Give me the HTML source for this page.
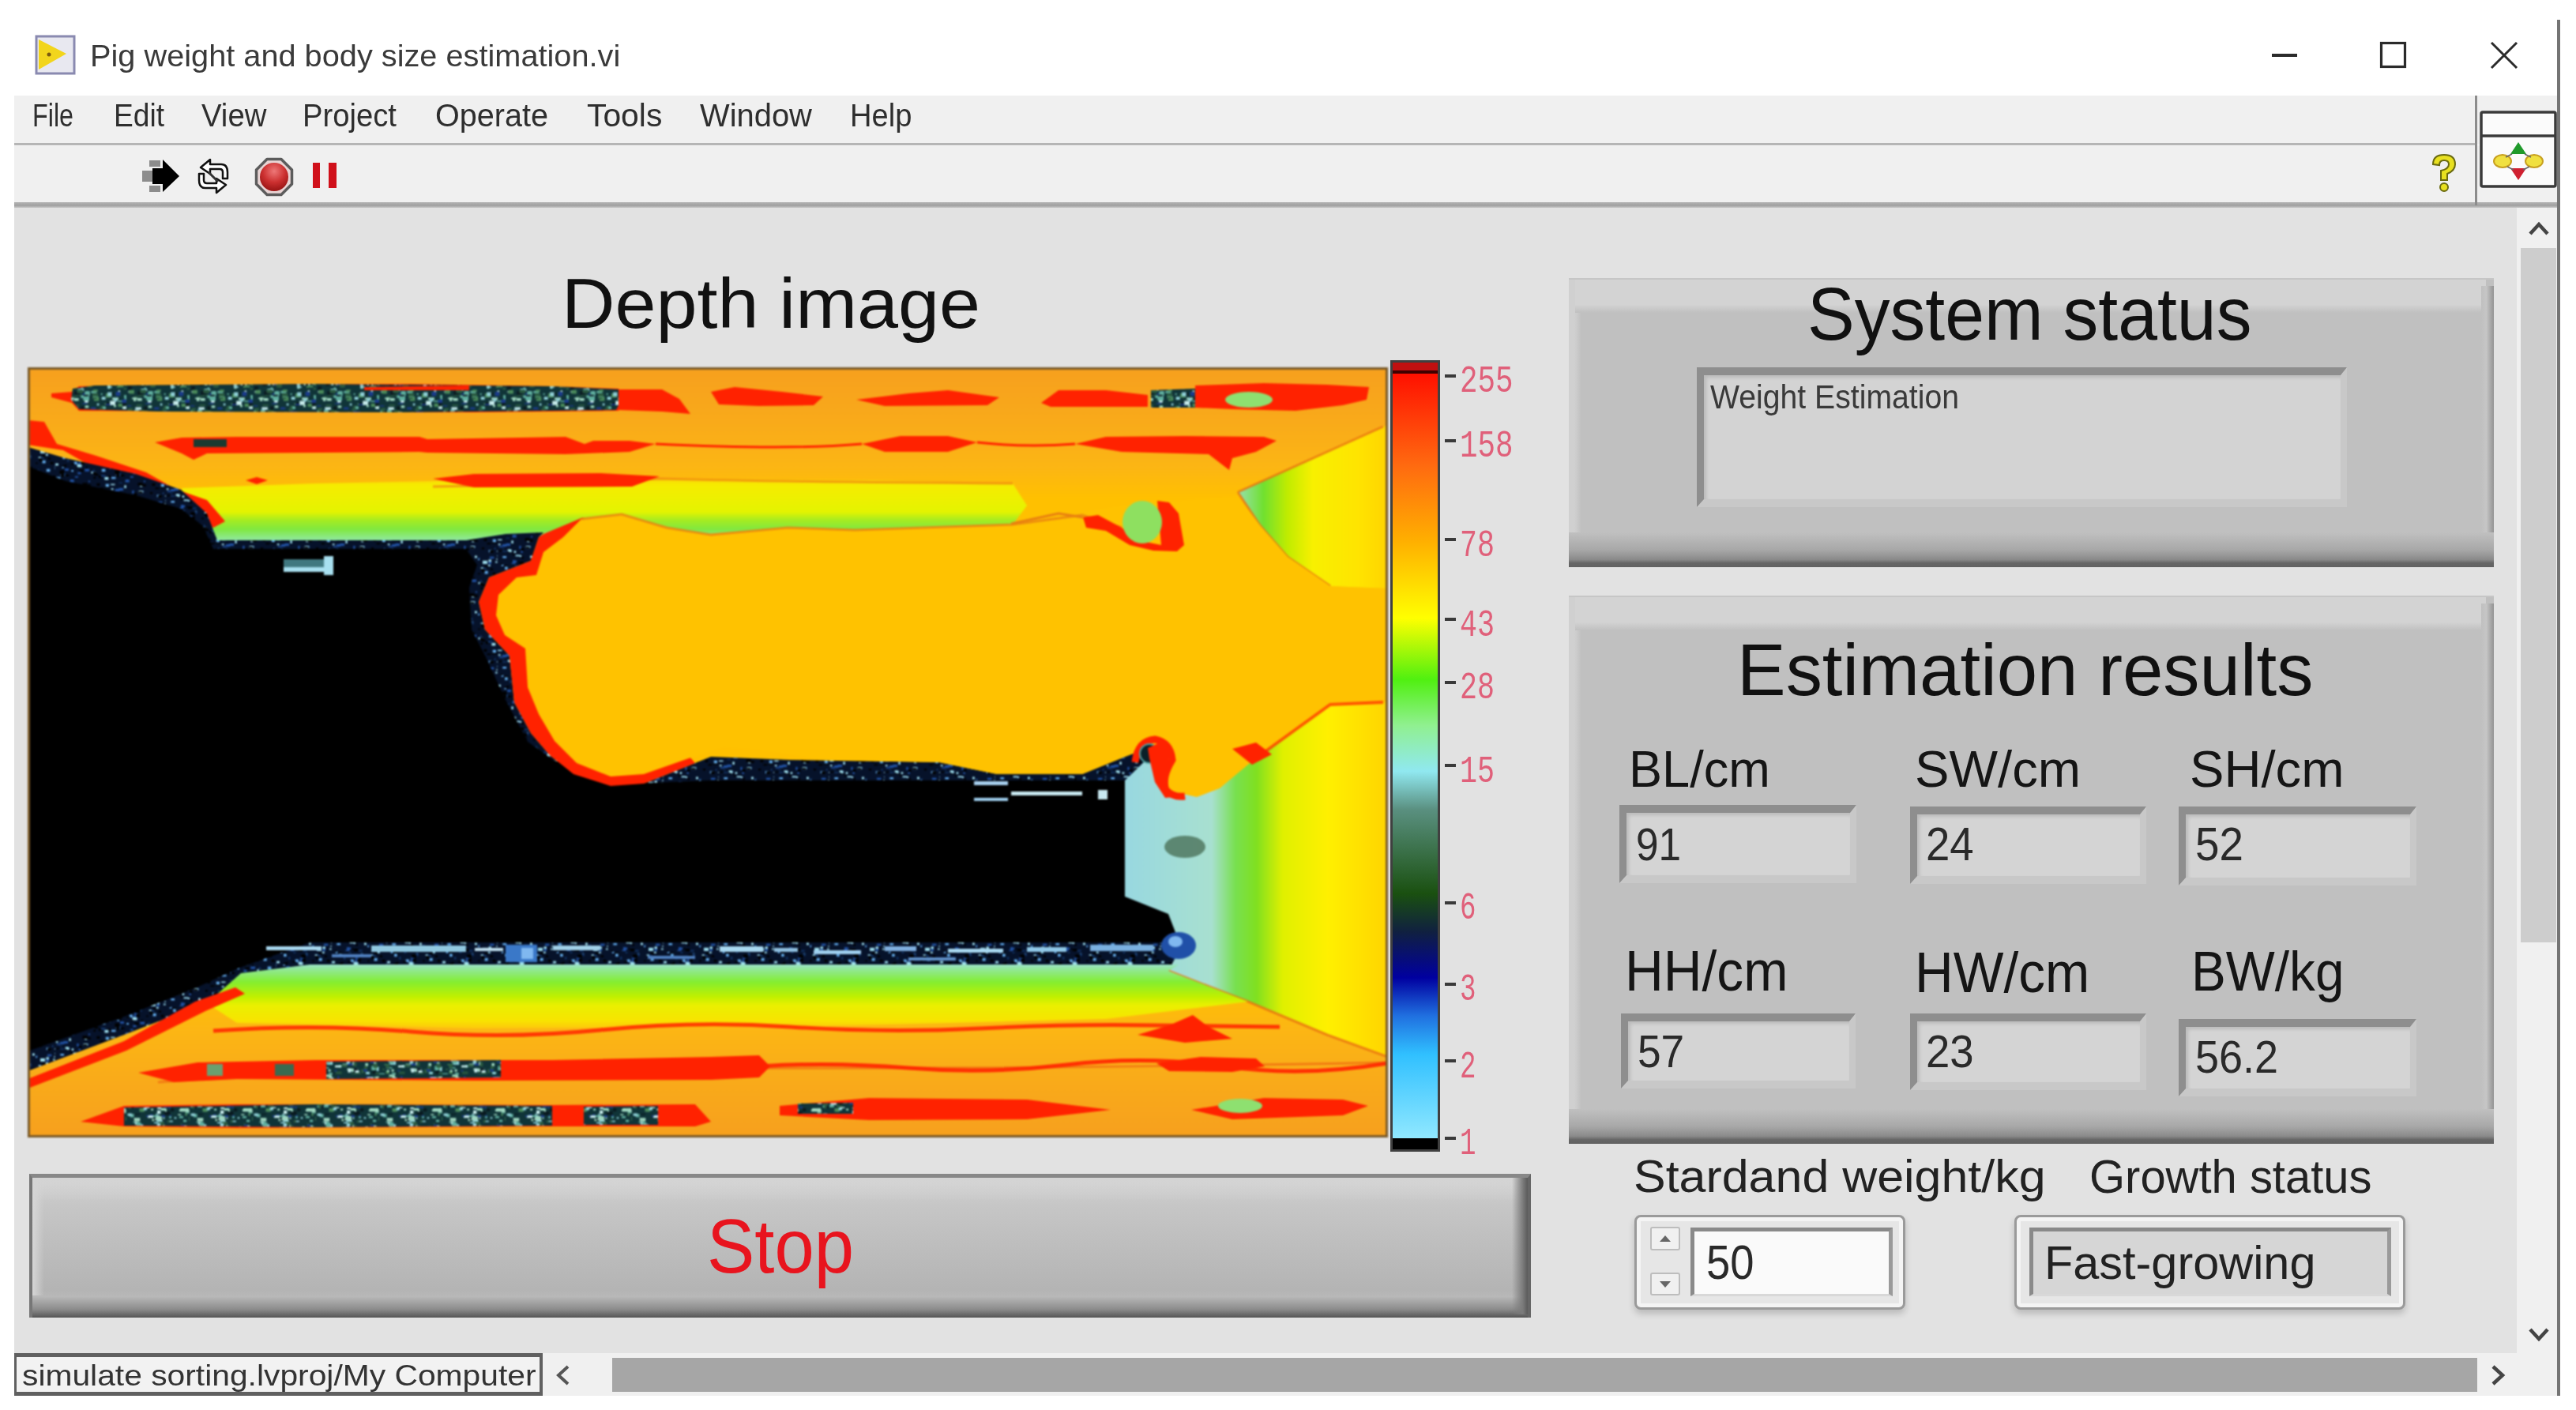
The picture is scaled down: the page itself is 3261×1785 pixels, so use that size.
<!DOCTYPE html><html><head><meta charset="utf-8"><style>
html,body{margin:0;padding:0}
body{width:3261px;height:1785px;position:relative;overflow:hidden;background:#fff;font-family:"Liberation Sans",sans-serif}
.b{position:absolute;box-sizing:border-box}
.t{position:absolute;white-space:nowrap;transform-origin:0 0}
svg{position:absolute}
</style></head><body>
<div class="b" style="left:18px;top:121px;width:3221px;height:62px;background:#f0f0f0"></div>
<div class="b" style="left:18px;top:181px;width:3116px;height:3px;background:linear-gradient(#c0c0c0,#a8a8a8 50%,#d8d8d8)"></div>
<div class="b" style="left:18px;top:184px;width:3221px;height:73px;background:#f0f0f0"></div>
<div class="b" style="left:18px;top:256px;width:3221px;height:7px;background:linear-gradient(#b4b4b4,#a0a0a0 60%,#c8c8c8)"></div>
<div class="b" style="left:3133px;top:121px;width:3px;height:139px;background:#8c8c8c"></div>
<div class="b" style="left:3237px;top:25px;width:4px;height:1742px;background:#747474"></div>
<div class="b" style="left:18px;top:263px;width:3168px;height:1450px;background:#e2e2e2"></div>
<div class="b" style="left:3186px;top:263px;width:51px;height:1450px;background:#f0f0f0"></div>
<div class="b" style="left:3191px;top:314px;width:45px;height:879px;background:#cdcdcd"></div>
<div class="b" style="left:18px;top:1713px;width:3219px;height:54px;background:#f0f0f0"></div>
<div class="b" style="left:775px;top:1719px;width:2361px;height:43px;background:#a6a6a6"></div>
<svg style="left:44px;top:44px" width="52" height="51" viewBox="0 0 52 51">
<rect x="2" y="2" width="48" height="47" fill="#e8e8f0" stroke="#8a8ab0" stroke-width="3"/>
<path d="M5 6 L40 24 L5 44 Z" fill="#f2d51c"/>
<circle cx="18" cy="25" r="2.5" fill="#7a5a10"/>
</svg>
<div class="t" style="left:113.6px;top:50.9px;font-size:39.68px;line-height:39.68px;font-family:'Liberation Sans', sans-serif;color:#3a3a3a;transform:scaleX(1.0013);">Pig weight and body size estimation.vi</div>
<div class="b" style="left:2876px;top:68px;width:32px;height:4px;background:#2b2b2b"></div>
<svg style="left:3010px;top:50px" width="40" height="40" viewBox="0 0 40 40"><rect x="4.5" y="4.5" width="30" height="30" fill="none" stroke="#2b2b2b" stroke-width="3.2"/></svg>
<svg style="left:3150px;top:50px" width="40" height="40" viewBox="0 0 40 40"><path d="M4 4 L36 36 M36 4 L4 36" stroke="#2b2b2b" stroke-width="3"/></svg>
<div class="t" style="left:41.0px;top:126.0px;font-size:40.70px;line-height:40.70px;font-family:'Liberation Sans', sans-serif;color:#2e2e2e;transform:scaleX(0.7931);">File</div>
<div class="t" style="left:144.0px;top:126.0px;font-size:40.70px;line-height:40.70px;font-family:'Liberation Sans', sans-serif;color:#2e2e2e;transform:scaleX(0.9127);">Edit</div>
<div class="t" style="left:254.5px;top:126.0px;font-size:40.70px;line-height:40.70px;font-family:'Liberation Sans', sans-serif;color:#2e2e2e;transform:scaleX(0.9420);">View</div>
<div class="t" style="left:383.0px;top:126.0px;font-size:40.70px;line-height:40.70px;font-family:'Liberation Sans', sans-serif;color:#2e2e2e;transform:scaleX(0.9396);">Project</div>
<div class="t" style="left:551.0px;top:126.0px;font-size:40.70px;line-height:40.70px;font-family:'Liberation Sans', sans-serif;color:#2e2e2e;transform:scaleX(0.9725);">Operate</div>
<div class="t" style="left:742.7px;top:126.0px;font-size:40.70px;line-height:40.70px;font-family:'Liberation Sans', sans-serif;color:#2e2e2e;transform:scaleX(1.0033);">Tools</div>
<div class="t" style="left:886.0px;top:126.0px;font-size:40.70px;line-height:40.70px;font-family:'Liberation Sans', sans-serif;color:#2e2e2e;transform:scaleX(0.9804);">Window</div>
<div class="t" style="left:1075.6px;top:126.0px;font-size:40.70px;line-height:40.70px;font-family:'Liberation Sans', sans-serif;color:#2e2e2e;transform:scaleX(0.9365);">Help</div>
<svg style="left:176px;top:198px" width="56" height="50" viewBox="0 0 56 50">
<rect x="13" y="5" width="14" height="8" fill="#8c8c8c"/><rect x="4" y="18" width="14" height="14" fill="#8c8c8c"/><rect x="13" y="37" width="14" height="8" fill="#8c8c8c"/>
<path d="M17 15 L30 15 L30 4 L51 25 L30 45 L30 35 L17 35 Z" fill="#000"/>
</svg>
<svg style="left:242px;top:198px" width="56" height="50" viewBox="0 0 56 50">
<path d="M12 14 L24 4 L24 10 L38 10 Q46 10 46 20 L46 28 L40 28 L40 20 Q40 16 36 16 L24 16 L24 22 Z" fill="#fff" stroke="#111" stroke-width="2.5" stroke-linejoin="round"/>
<path d="M44 36 L32 46 L32 40 L18 40 Q10 40 10 30 L10 22 L16 22 L16 30 Q16 34 20 34 L32 34 L32 28 Z" fill="#fff" stroke="#111" stroke-width="2.5" stroke-linejoin="round"/>
<path d="M22 20 L34 32" stroke="#333" stroke-width="3"/>
</svg>
<svg style="left:321px;top:198px" width="52" height="52" viewBox="0 0 52 52">
<defs><radialGradient id="rg" cx="50%" cy="30%" r="65%"><stop offset="0" stop-color="#ee7878"/><stop offset="0.6" stop-color="#cc3030"/><stop offset="1" stop-color="#a01818"/></radialGradient></defs>
<path d="M17 3.5 L35 3.5 L48.5 17 L48.5 35 L35 48.5 L17 48.5 L3.5 35 L3.5 17 Z" fill="#e8d4d4" stroke="#5c5c5c" stroke-width="3.5" stroke-linejoin="round"/>
<circle cx="26" cy="26" r="18" fill="url(#rg)"/>
</svg>
<div class="b" style="left:396px;top:206px;width:9px;height:32px;background:#d0101a"></div>
<div class="b" style="left:416px;top:206px;width:10px;height:32px;background:#d0101a"></div>
<svg style="left:3072px;top:192px" width="44" height="56" viewBox="0 0 44 56">
<path d="M8 16 Q8 4 22 4 Q36 4 36 16 Q36 24 26 28 L26 36 L18 36 L18 24 Q28 22 28 16 Q28 11 22 11 Q16 11 16 17 Z" fill="#e8e020" stroke="#6a6a10" stroke-width="2"/>
<circle cx="22" cy="45" r="5" fill="#e8e020" stroke="#6a6a10" stroke-width="2"/>
</svg>
<svg style="left:3138px;top:139px" width="100" height="100" viewBox="0 0 100 100">
<rect x="3" y="3" width="94" height="94" rx="2" fill="#fbfbfb" stroke="#3a3a3a" stroke-width="3.5"/>
<line x1="3" y1="33" x2="97" y2="33" stroke="#3a3a3a" stroke-width="3.5"/>
<path d="M50 41 L60 56 L40 56 Z" fill="#1f9a2a"/>
<path d="M50 89 L60 74 L40 74 Z" fill="#d02030"/>
<ellipse cx="30" cy="65" rx="11" ry="8" fill="#f0e040" stroke="#c8a020" stroke-width="2"/>
<ellipse cx="70" cy="65" rx="11" ry="8" fill="#f0e040" stroke="#c8a020" stroke-width="2"/>
<path d="M42 56 L34 60 M58 56 L66 60 M36 72 L44 76 M64 72 L56 76" stroke="#666" stroke-width="1.5"/>
</svg>
<svg style="left:3200px;top:276px" width="28" height="26" viewBox="0 0 28 26"><path d="M3 20 L14 8 L25 20" fill="none" stroke="#444" stroke-width="4.5"/></svg>
<svg style="left:3200px;top:1677px" width="28" height="26" viewBox="0 0 28 26"><path d="M3 6 L14 18 L25 6" fill="none" stroke="#444" stroke-width="4.5"/></svg>
<svg style="left:3150px;top:1727px" width="26" height="28" viewBox="0 0 26 28"><path d="M6 3 L18 14 L6 25" fill="none" stroke="#444" stroke-width="4.5"/></svg>
<svg style="left:699px;top:1727px" width="26" height="28" viewBox="0 0 26 28"><path d="M20 3 L8 14 L20 25" fill="none" stroke="#555" stroke-width="4"/></svg>
<div class="b" style="left:18px;top:1713px;width:669px;height:54px;background:#f2f2f2;border:5px solid #606060;border-left-width:3px;border-right-width:4px"></div>
<div class="t" style="left:27.5px;top:1722.8px;font-size:37.50px;line-height:37.50px;font-family:'Liberation Sans', sans-serif;color:#333;transform:scaleX(1.0876);">simulate sorting.lvproj/My Computer</div>
<svg style="left:35px;top:465px;filter:blur(0.9px)" width="1722" height="975" viewBox="35 465 1722 975"><defs><pattern id="nz" width="80" height="80" patternUnits="userSpaceOnUse"><rect width="80" height="80" fill="#103438"/><rect x="19.0" y="43.5" width="4.2" height="3.9" fill="#4a8a5a"/><rect x="48.4" y="72.7" width="4.8" height="3.6" fill="#c8ecec"/><rect x="79.7" y="37.6" width="7.0" height="3.3" fill="#1a3a8a"/><rect x="18.6" y="12.1" width="7.6" height="2.9" fill="#8fd0d8"/><rect x="53.7" y="5.1" width="6.5" height="3.8" fill="#0a1a20"/><rect x="62.4" y="65.9" width="3.6" height="3.8" fill="#a0d8c0"/><rect x="57.1" y="73.7" width="4.4" height="4.7" fill="#2a5a40"/><rect x="77.1" y="10.7" width="4.2" height="1.4" fill="#2a5a40"/><rect x="17.4" y="77.2" width="4.6" height="4.0" fill="#0a1a20"/><rect x="33.7" y="66.7" width="5.4" height="3.6" fill="#a0d8c0"/><rect x="46.7" y="72.3" width="6.1" height="5.3" fill="#0a1a20"/><rect x="79.3" y="53.7" width="3.0" height="5.0" fill="#4a8a5a"/><rect x="57.1" y="16.9" width="7.0" height="3.7" fill="#0a1a20"/><rect x="10.0" y="38.6" width="5.8" height="3.3" fill="#60b0a0"/><rect x="64.0" y="32.8" width="2.9" height="2.5" fill="#a0d8c0"/><rect x="69.8" y="3.5" width="5.7" height="1.4" fill="#60b0a0"/><rect x="44.1" y="73.8" width="3.7" height="2.2" fill="#8fd0d8"/><rect x="24.8" y="6.2" width="5.6" height="1.3" fill="#c8ecec"/><rect x="77.7" y="23.3" width="3.6" height="4.2" fill="#60b0a0"/><rect x="25.1" y="76.7" width="7.4" height="2.9" fill="#2a5a40"/><rect x="69.6" y="30.9" width="7.2" height="4.2" fill="#4a8a5a"/><rect x="49.6" y="75.2" width="5.0" height="3.1" fill="#c8ecec"/><rect x="74.9" y="35.0" width="3.5" height="2.5" fill="#60b0a0"/><rect x="0.9" y="33.2" width="5.5" height="1.3" fill="#1a3a8a"/><rect x="4.8" y="50.2" width="4.8" height="4.2" fill="#60b0a0"/><rect x="48.7" y="22.3" width="4.9" height="3.8" fill="#8fd0d8"/><rect x="77.1" y="20.1" width="4.7" height="3.8" fill="#60b0a0"/><rect x="14.2" y="14.8" width="6.5" height="4.9" fill="#0a1a20"/><rect x="24.0" y="30.2" width="6.6" height="1.3" fill="#1a3a8a"/><rect x="24.8" y="17.8" width="6.8" height="2.3" fill="#1a3a8a"/><rect x="54.2" y="52.0" width="2.6" height="3.8" fill="#60b0a0"/><rect x="54.0" y="18.0" width="6.9" height="5.4" fill="#4a8a5a"/><rect x="26.9" y="52.0" width="7.3" height="3.2" fill="#c8ecec"/><rect x="63.0" y="2.7" width="7.7" height="2.6" fill="#1a3a8a"/><rect x="69.1" y="27.2" width="7.0" height="1.6" fill="#60b0a0"/><rect x="47.2" y="33.7" width="5.1" height="4.9" fill="#2a5a40"/><rect x="27.7" y="33.4" width="4.5" height="3.0" fill="#a0d8c0"/><rect x="12.5" y="0.4" width="7.7" height="5.1" fill="#a0d8c0"/><rect x="44.7" y="78.9" width="6.3" height="1.3" fill="#2a5a40"/><rect x="66.9" y="53.0" width="5.1" height="2.5" fill="#60b0a0"/><rect x="71.2" y="68.9" width="7.1" height="5.5" fill="#4a8a5a"/><rect x="64.8" y="3.6" width="7.4" height="4.3" fill="#c8ecec"/><rect x="71.7" y="72.0" width="5.5" height="1.3" fill="#4a8a5a"/><rect x="13.7" y="24.0" width="6.0" height="3.5" fill="#a0d8c0"/><rect x="4.3" y="73.0" width="2.7" height="1.8" fill="#2a5a40"/><rect x="64.9" y="4.9" width="3.3" height="1.7" fill="#4a8a5a"/><rect x="13.7" y="63.3" width="7.5" height="4.7" fill="#8fd0d8"/><rect x="39.0" y="45.7" width="4.4" height="4.5" fill="#c8ecec"/><rect x="21.5" y="42.2" width="4.5" height="3.3" fill="#8fd0d8"/><rect x="68.6" y="62.0" width="2.3" height="1.4" fill="#2a5a40"/><rect x="78.0" y="68.4" width="2.5" height="3.4" fill="#60b0a0"/><rect x="12.6" y="5.7" width="4.3" height="2.9" fill="#0a1a20"/><rect x="28.9" y="15.3" width="4.0" height="1.7" fill="#8fd0d8"/><rect x="57.3" y="30.4" width="2.5" height="2.0" fill="#60b0a0"/><rect x="36.9" y="52.0" width="5.2" height="4.0" fill="#8fd0d8"/><rect x="49.8" y="34.5" width="4.2" height="3.4" fill="#60b0a0"/><rect x="33.6" y="55.5" width="4.8" height="2.3" fill="#0a1a20"/><rect x="55.6" y="5.7" width="4.5" height="3.1" fill="#8fd0d8"/><rect x="74.9" y="29.9" width="7.4" height="4.7" fill="#0a1a20"/><rect x="9.7" y="55.2" width="7.6" height="4.4" fill="#a0d8c0"/><rect x="53.4" y="58.7" width="5.4" height="1.7" fill="#8fd0d8"/><rect x="37.9" y="18.9" width="4.3" height="3.5" fill="#4a8a5a"/><rect x="52.7" y="30.1" width="6.9" height="2.7" fill="#4a8a5a"/><rect x="2.0" y="9.2" width="4.9" height="4.3" fill="#0a1a20"/><rect x="46.3" y="63.9" width="2.2" height="4.6" fill="#c8ecec"/><rect x="8.5" y="59.9" width="7.6" height="1.5" fill="#60b0a0"/><rect x="69.6" y="14.4" width="2.5" height="5.6" fill="#c8ecec"/><rect x="36.3" y="56.0" width="7.7" height="2.3" fill="#a0d8c0"/><rect x="75.1" y="44.5" width="7.8" height="2.9" fill="#c8ecec"/><rect x="77.8" y="33.0" width="6.5" height="1.9" fill="#2a5a40"/><rect x="12.5" y="32.1" width="7.3" height="1.9" fill="#2a5a40"/><rect x="59.9" y="73.3" width="5.1" height="3.1" fill="#1a3a8a"/><rect x="10.9" y="60.2" width="2.9" height="3.5" fill="#c8ecec"/><rect x="68.1" y="43.0" width="6.7" height="4.2" fill="#a0d8c0"/><rect x="47.6" y="46.8" width="7.9" height="5.1" fill="#0a1a20"/><rect x="1.8" y="38.4" width="4.3" height="2.0" fill="#60b0a0"/><rect x="19.1" y="38.6" width="7.2" height="3.0" fill="#2a5a40"/><rect x="56.1" y="16.5" width="5.5" height="5.2" fill="#8fd0d8"/><rect x="38.5" y="57.7" width="7.1" height="3.0" fill="#8fd0d8"/><rect x="37.4" y="18.4" width="3.4" height="4.4" fill="#4a8a5a"/><rect x="76.7" y="68.3" width="3.5" height="2.0" fill="#0a1a20"/><rect x="11.0" y="49.8" width="6.1" height="1.4" fill="#0a1a20"/><rect x="13.6" y="3.6" width="3.1" height="1.6" fill="#4a8a5a"/><rect x="9.4" y="21.1" width="7.5" height="1.4" fill="#2a5a40"/><rect x="46.4" y="54.0" width="2.0" height="2.7" fill="#a0d8c0"/><rect x="30.4" y="6.2" width="5.9" height="4.5" fill="#2a5a40"/><rect x="31.3" y="43.5" width="2.7" height="2.4" fill="#a0d8c0"/><rect x="9.0" y="71.0" width="7.5" height="1.6" fill="#60b0a0"/><rect x="54.3" y="29.5" width="4.7" height="4.1" fill="#0a1a20"/><rect x="8.6" y="75.6" width="4.0" height="3.7" fill="#4a8a5a"/><rect x="53.4" y="40.7" width="2.4" height="2.5" fill="#1a3a8a"/><rect x="51.7" y="58.4" width="2.9" height="2.8" fill="#2a5a40"/><rect x="9.9" y="74.5" width="2.8" height="2.7" fill="#a0d8c0"/><rect x="44.4" y="51.8" width="4.7" height="2.6" fill="#1a3a8a"/><rect x="56.4" y="8.6" width="3.1" height="3.6" fill="#a0d8c0"/><rect x="28.7" y="21.3" width="4.3" height="5.0" fill="#8fd0d8"/><rect x="38.3" y="21.7" width="6.2" height="3.5" fill="#60b0a0"/><rect x="75.6" y="35.9" width="6.9" height="1.5" fill="#2a5a40"/><rect x="67.8" y="9.0" width="3.6" height="1.6" fill="#4a8a5a"/><rect x="45.1" y="72.8" width="2.7" height="4.3" fill="#a0d8c0"/><rect x="53.6" y="31.3" width="7.9" height="1.8" fill="#1a3a8a"/><rect x="68.8" y="63.9" width="5.3" height="1.9" fill="#1a3a8a"/><rect x="16.2" y="20.0" width="6.7" height="1.3" fill="#2a5a40"/><rect x="71.3" y="75.9" width="4.3" height="3.6" fill="#0a1a20"/><rect x="50.7" y="78.2" width="6.1" height="2.5" fill="#2a5a40"/><rect x="2.4" y="15.2" width="5.8" height="1.7" fill="#c8ecec"/><rect x="39.3" y="41.9" width="4.8" height="2.1" fill="#c8ecec"/><rect x="3.0" y="40.0" width="5.9" height="3.2" fill="#0a1a20"/><rect x="76.7" y="71.4" width="2.8" height="4.7" fill="#8fd0d8"/><rect x="2.0" y="49.5" width="5.0" height="3.4" fill="#8fd0d8"/><rect x="74.4" y="25.8" width="7.2" height="4.3" fill="#1a3a8a"/><rect x="6.4" y="67.1" width="6.7" height="1.3" fill="#4a8a5a"/><rect x="59.2" y="27.5" width="6.8" height="5.3" fill="#c8ecec"/><rect x="35.0" y="60.5" width="4.9" height="1.7" fill="#8fd0d8"/><rect x="32.7" y="67.6" width="6.2" height="2.9" fill="#2a5a40"/><rect x="55.9" y="43.0" width="4.5" height="4.1" fill="#0a1a20"/><rect x="1.9" y="36.6" width="6.1" height="3.1" fill="#2a5a40"/><rect x="72.0" y="57.6" width="4.2" height="2.8" fill="#60b0a0"/><rect x="47.7" y="17.9" width="2.0" height="2.1" fill="#60b0a0"/><rect x="11.5" y="36.8" width="3.2" height="2.1" fill="#1a3a8a"/><rect x="46.8" y="40.3" width="5.8" height="1.8" fill="#1a3a8a"/><rect x="35.4" y="14.8" width="7.0" height="3.0" fill="#60b0a0"/><rect x="32.6" y="56.3" width="2.3" height="3.0" fill="#a0d8c0"/><rect x="39.5" y="72.7" width="7.3" height="2.3" fill="#a0d8c0"/><rect x="38.0" y="13.2" width="5.7" height="2.7" fill="#4a8a5a"/><rect x="47.6" y="64.6" width="3.7" height="5.5" fill="#2a5a40"/><rect x="63.1" y="76.9" width="4.9" height="3.7" fill="#8fd0d8"/><rect x="65.2" y="50.3" width="4.1" height="1.6" fill="#a0d8c0"/><rect x="77.5" y="47.4" width="2.0" height="1.3" fill="#4a8a5a"/><rect x="1.5" y="40.2" width="4.9" height="2.0" fill="#60b0a0"/><rect x="16.1" y="77.9" width="4.9" height="4.7" fill="#60b0a0"/><rect x="75.2" y="2.7" width="3.8" height="3.9" fill="#a0d8c0"/><rect x="7.0" y="23.5" width="7.1" height="1.7" fill="#a0d8c0"/><rect x="43.8" y="42.9" width="6.7" height="3.0" fill="#a0d8c0"/><rect x="66.9" y="44.3" width="7.5" height="2.8" fill="#a0d8c0"/><rect x="35.1" y="35.6" width="6.2" height="2.7" fill="#1a3a8a"/><rect x="40.6" y="60.2" width="7.5" height="4.3" fill="#2a5a40"/><rect x="3.4" y="13.7" width="6.5" height="4.8" fill="#4a8a5a"/><rect x="60.7" y="54.2" width="2.6" height="2.2" fill="#8fd0d8"/><rect x="70.3" y="69.8" width="4.7" height="5.1" fill="#60b0a0"/><rect x="79.8" y="0.1" width="3.2" height="4.7" fill="#4a8a5a"/><rect x="27.1" y="24.9" width="4.7" height="4.8" fill="#c8ecec"/><rect x="19.3" y="3.9" width="2.9" height="4.0" fill="#8fd0d8"/><rect x="9.0" y="23.0" width="3.3" height="4.9" fill="#a0d8c0"/><rect x="40.4" y="72.6" width="3.9" height="5.1" fill="#c8ecec"/><rect x="37.4" y="49.8" width="2.2" height="4.7" fill="#8fd0d8"/><rect x="68.7" y="8.1" width="7.7" height="2.3" fill="#4a8a5a"/><rect x="37.2" y="17.8" width="7.0" height="3.9" fill="#2a5a40"/><rect x="60.9" y="69.7" width="4.1" height="3.9" fill="#2a5a40"/><rect x="62.2" y="23.3" width="7.7" height="3.2" fill="#a0d8c0"/><rect x="16.5" y="43.1" width="4.8" height="4.4" fill="#4a8a5a"/><rect x="27.3" y="15.4" width="6.5" height="5.3" fill="#60b0a0"/><rect x="33.8" y="51.9" width="5.6" height="2.1" fill="#60b0a0"/><rect x="67.0" y="5.0" width="3.4" height="3.1" fill="#0a1a20"/><rect x="17.4" y="13.2" width="7.6" height="4.4" fill="#2a5a40"/><rect x="74.5" y="42.9" width="4.5" height="5.4" fill="#a0d8c0"/><rect x="38.7" y="61.9" width="4.4" height="5.6" fill="#8fd0d8"/><rect x="23.4" y="74.7" width="3.1" height="1.6" fill="#1a3a8a"/><rect x="23.5" y="41.6" width="5.8" height="1.4" fill="#c8ecec"/><rect x="22.1" y="34.6" width="4.1" height="4.5" fill="#0a1a20"/><rect x="11.4" y="35.5" width="7.5" height="3.2" fill="#c8ecec"/><rect x="12.3" y="61.0" width="6.2" height="5.5" fill="#60b0a0"/><rect x="75.4" y="34.5" width="7.6" height="3.3" fill="#c8ecec"/><rect x="28.8" y="68.2" width="3.7" height="3.2" fill="#60b0a0"/><rect x="64.6" y="23.8" width="3.5" height="4.7" fill="#8fd0d8"/><rect x="1.1" y="50.3" width="2.9" height="1.3" fill="#8fd0d8"/><rect x="0.2" y="78.7" width="6.8" height="2.8" fill="#60b0a0"/><rect x="78.3" y="2.8" width="3.1" height="1.3" fill="#a0d8c0"/><rect x="72.4" y="66.8" width="5.6" height="4.8" fill="#2a5a40"/><rect x="24.9" y="19.8" width="6.8" height="3.0" fill="#0a1a20"/><rect x="27.2" y="2.3" width="2.2" height="5.6" fill="#1a3a8a"/><rect x="73.0" y="64.7" width="3.5" height="1.8" fill="#a0d8c0"/><rect x="40.7" y="66.5" width="5.3" height="2.4" fill="#1a3a8a"/><rect x="3.6" y="38.9" width="2.4" height="4.8" fill="#2a5a40"/><rect x="37.4" y="53.2" width="7.6" height="4.8" fill="#a0d8c0"/><rect x="29.7" y="50.6" width="3.8" height="1.5" fill="#1a3a8a"/><rect x="79.4" y="43.8" width="4.4" height="2.7" fill="#2a5a40"/><rect x="22.3" y="20.4" width="3.7" height="3.5" fill="#60b0a0"/><rect x="11.2" y="3.0" width="4.9" height="2.2" fill="#2a5a40"/><rect x="74.5" y="49.0" width="2.2" height="3.7" fill="#4a8a5a"/><rect x="39.0" y="22.4" width="6.3" height="5.2" fill="#4a8a5a"/><rect x="34.8" y="6.1" width="2.2" height="3.3" fill="#2a5a40"/><rect x="15.6" y="73.7" width="3.1" height="2.9" fill="#a0d8c0"/><rect x="25.3" y="21.7" width="7.7" height="5.4" fill="#60b0a0"/><rect x="48.8" y="44.4" width="2.2" height="3.0" fill="#a0d8c0"/><rect x="78.4" y="6.3" width="3.4" height="2.1" fill="#4a8a5a"/><rect x="55.9" y="9.2" width="5.8" height="1.7" fill="#8fd0d8"/><rect x="75.4" y="77.9" width="6.2" height="3.1" fill="#2a5a40"/><rect x="36.9" y="23.2" width="5.4" height="2.0" fill="#2a5a40"/><rect x="76.6" y="11.5" width="7.4" height="2.0" fill="#2a5a40"/><rect x="54.0" y="51.8" width="2.9" height="1.4" fill="#1a3a8a"/><rect x="24.9" y="51.9" width="2.8" height="1.8" fill="#1a3a8a"/><rect x="42.8" y="30.6" width="2.6" height="2.9" fill="#8fd0d8"/><rect x="22.5" y="10.5" width="2.9" height="1.8" fill="#60b0a0"/><rect x="75.0" y="48.3" width="7.6" height="1.2" fill="#60b0a0"/><rect x="79.8" y="78.4" width="3.5" height="2.8" fill="#2a5a40"/><rect x="8.3" y="67.7" width="4.8" height="4.5" fill="#2a5a40"/><rect x="45.5" y="37.1" width="5.2" height="3.1" fill="#2a5a40"/><rect x="66.6" y="16.0" width="5.6" height="5.3" fill="#1a3a8a"/><rect x="24.1" y="68.7" width="7.8" height="2.6" fill="#c8ecec"/></pattern><pattern id="nzb" width="70" height="70" patternUnits="userSpaceOnUse"><rect width="70" height="70" fill="#06122a"/><rect x="22.7" y="10.6" width="4.6" height="1.4" fill="#000"/><rect x="6.6" y="40.8" width="5.6" height="1.8" fill="#60a8e8"/><rect x="30.4" y="4.9" width="2.4" height="2.5" fill="#000"/><rect x="8.7" y="15.6" width="4.5" height="4.0" fill="#000"/><rect x="41.0" y="3.5" width="2.9" height="2.9" fill="#a0e0f0"/><rect x="20.3" y="10.1" width="2.5" height="2.1" fill="#103060"/><rect x="12.7" y="40.7" width="4.6" height="2.3" fill="#000"/><rect x="49.8" y="39.5" width="4.5" height="2.7" fill="#000"/><rect x="29.9" y="22.0" width="4.3" height="2.6" fill="#2050a0"/><rect x="17.4" y="12.6" width="5.1" height="1.4" fill="#2050a0"/><rect x="36.8" y="61.3" width="4.9" height="2.1" fill="#60a8e8"/><rect x="8.3" y="29.3" width="5.0" height="1.7" fill="#000"/><rect x="29.5" y="67.3" width="2.3" height="2.9" fill="#2050a0"/><rect x="23.8" y="24.5" width="4.0" height="3.6" fill="#60a8e8"/><rect x="58.8" y="66.1" width="3.9" height="3.2" fill="#60a8e8"/><rect x="51.2" y="21.7" width="4.3" height="3.2" fill="#000"/><rect x="19.9" y="27.0" width="4.7" height="1.3" fill="#000"/><rect x="24.9" y="42.8" width="4.0" height="1.9" fill="#2050a0"/><rect x="9.1" y="17.3" width="3.6" height="3.8" fill="#60a8e8"/><rect x="11.6" y="28.1" width="3.1" height="1.6" fill="#000"/><rect x="60.5" y="19.5" width="3.7" height="2.3" fill="#000"/><rect x="67.0" y="10.6" width="2.7" height="1.9" fill="#a0e0f0"/><rect x="0.8" y="58.2" width="2.7" height="2.0" fill="#a0e0f0"/><rect x="29.3" y="25.8" width="4.3" height="4.1" fill="#103060"/><rect x="60.1" y="66.5" width="4.6" height="3.4" fill="#000"/><rect x="63.0" y="54.6" width="5.5" height="3.6" fill="#000"/><rect x="27.9" y="27.6" width="3.9" height="2.4" fill="#a0e0f0"/><rect x="4.7" y="14.6" width="2.6" height="2.2" fill="#60a8e8"/><rect x="7.2" y="39.7" width="4.1" height="4.0" fill="#000"/><rect x="1.8" y="61.2" width="4.5" height="1.6" fill="#2050a0"/><rect x="66.9" y="42.2" width="3.9" height="1.5" fill="#000"/><rect x="69.5" y="32.6" width="3.9" height="1.5" fill="#60a8e8"/><rect x="52.5" y="51.8" width="3.9" height="3.3" fill="#000"/><rect x="1.6" y="66.6" width="4.1" height="1.6" fill="#000"/><rect x="64.0" y="53.1" width="3.2" height="3.1" fill="#60a8e8"/><rect x="48.7" y="18.3" width="3.5" height="1.7" fill="#a0e0f0"/><rect x="37.3" y="54.5" width="3.3" height="1.9" fill="#a0e0f0"/><rect x="56.4" y="57.3" width="5.0" height="1.9" fill="#000"/><rect x="34.5" y="51.2" width="6.0" height="3.6" fill="#000"/><rect x="18.1" y="48.5" width="5.8" height="2.5" fill="#103060"/><rect x="69.2" y="66.9" width="3.5" height="1.9" fill="#a0e0f0"/><rect x="32.9" y="23.6" width="3.9" height="4.2" fill="#000"/><rect x="58.8" y="33.6" width="4.6" height="3.6" fill="#60a8e8"/><rect x="58.4" y="8.4" width="3.6" height="3.3" fill="#a0e0f0"/><rect x="33.5" y="12.5" width="5.2" height="2.2" fill="#103060"/><rect x="27.7" y="28.1" width="5.8" height="3.4" fill="#a0e0f0"/><rect x="69.5" y="1.9" width="4.4" height="2.6" fill="#103060"/><rect x="10.2" y="57.9" width="5.9" height="3.2" fill="#2050a0"/><rect x="10.9" y="38.4" width="2.1" height="3.6" fill="#103060"/><rect x="45.5" y="36.9" width="5.7" height="2.5" fill="#a0e0f0"/><rect x="57.8" y="14.8" width="3.0" height="2.1" fill="#a0e0f0"/><rect x="53.5" y="22.8" width="4.2" height="3.7" fill="#60a8e8"/><rect x="63.7" y="24.8" width="3.8" height="3.0" fill="#000"/><rect x="29.4" y="64.2" width="4.0" height="2.8" fill="#000"/><rect x="35.7" y="61.1" width="5.1" height="3.0" fill="#a0e0f0"/><rect x="12.1" y="33.1" width="4.9" height="2.9" fill="#2050a0"/><rect x="47.8" y="37.2" width="3.9" height="3.5" fill="#000"/><rect x="4.0" y="13.4" width="2.2" height="1.5" fill="#000"/><rect x="39.3" y="53.2" width="5.6" height="2.5" fill="#000"/><rect x="68.1" y="42.4" width="2.8" height="2.0" fill="#000"/><rect x="37.3" y="33.5" width="5.8" height="3.3" fill="#2050a0"/><rect x="64.6" y="62.5" width="2.8" height="2.5" fill="#000"/><rect x="8.5" y="30.9" width="2.3" height="1.9" fill="#60a8e8"/><rect x="14.9" y="21.2" width="2.5" height="3.5" fill="#103060"/><rect x="45.0" y="25.6" width="3.0" height="1.6" fill="#000"/><rect x="15.4" y="66.7" width="3.6" height="2.7" fill="#103060"/><rect x="58.3" y="11.3" width="3.7" height="2.7" fill="#2050a0"/><rect x="29.5" y="25.0" width="2.4" height="2.3" fill="#2050a0"/><rect x="38.8" y="30.8" width="2.1" height="2.2" fill="#000"/><rect x="20.7" y="67.3" width="2.5" height="4.0" fill="#a0e0f0"/><rect x="68.0" y="7.3" width="3.1" height="1.3" fill="#a0e0f0"/><rect x="18.9" y="9.1" width="3.7" height="3.9" fill="#2050a0"/><rect x="28.4" y="37.6" width="4.1" height="2.7" fill="#2050a0"/><rect x="6.3" y="4.0" width="4.8" height="2.5" fill="#60a8e8"/><rect x="18.8" y="1.2" width="2.4" height="2.0" fill="#000"/><rect x="59.9" y="4.7" width="5.5" height="2.6" fill="#2050a0"/><rect x="69.6" y="29.2" width="5.7" height="3.1" fill="#60a8e8"/><rect x="36.9" y="16.7" width="2.4" height="1.7" fill="#60a8e8"/><rect x="12.7" y="65.3" width="4.5" height="2.8" fill="#a0e0f0"/><rect x="20.3" y="35.0" width="2.7" height="2.2" fill="#60a8e8"/><rect x="69.6" y="2.6" width="2.1" height="2.7" fill="#a0e0f0"/><rect x="36.0" y="17.2" width="3.8" height="3.2" fill="#103060"/><rect x="30.3" y="34.7" width="5.3" height="2.4" fill="#000"/><rect x="21.5" y="15.1" width="2.9" height="1.8" fill="#103060"/><rect x="51.0" y="9.8" width="6.0" height="4.1" fill="#a0e0f0"/><rect x="1.0" y="43.8" width="5.5" height="2.5" fill="#60a8e8"/><rect x="5.9" y="58.9" width="5.5" height="3.2" fill="#2050a0"/><rect x="41.9" y="48.5" width="2.2" height="1.8" fill="#2050a0"/><rect x="31.2" y="18.4" width="5.8" height="4.1" fill="#000"/><rect x="22.6" y="2.4" width="5.5" height="1.9" fill="#a0e0f0"/><rect x="0.1" y="26.7" width="3.9" height="2.7" fill="#a0e0f0"/><rect x="17.4" y="54.3" width="2.4" height="3.7" fill="#a0e0f0"/><rect x="28.0" y="2.9" width="2.1" height="2.1" fill="#a0e0f0"/><rect x="5.9" y="67.0" width="5.4" height="1.7" fill="#103060"/><rect x="54.9" y="41.8" width="5.1" height="3.4" fill="#000"/><rect x="10.5" y="50.7" width="4.6" height="1.3" fill="#103060"/><rect x="62.4" y="43.9" width="4.9" height="3.6" fill="#a0e0f0"/><rect x="63.7" y="52.7" width="4.3" height="3.6" fill="#60a8e8"/><rect x="57.8" y="40.9" width="5.6" height="3.2" fill="#103060"/><rect x="45.0" y="6.0" width="2.2" height="3.1" fill="#60a8e8"/><rect x="26.4" y="31.6" width="2.2" height="1.3" fill="#000"/><rect x="47.6" y="34.3" width="2.0" height="3.6" fill="#103060"/><rect x="65.3" y="62.9" width="2.4" height="2.8" fill="#103060"/><rect x="51.6" y="17.7" width="2.3" height="2.0" fill="#103060"/><rect x="53.0" y="16.2" width="4.6" height="2.6" fill="#000"/><rect x="5.4" y="63.7" width="3.1" height="1.3" fill="#103060"/><rect x="45.0" y="5.4" width="2.6" height="2.0" fill="#103060"/><rect x="48.5" y="43.5" width="2.5" height="2.6" fill="#000"/><rect x="18.8" y="47.0" width="4.8" height="3.2" fill="#2050a0"/><rect x="49.6" y="20.0" width="3.9" height="3.5" fill="#000"/><rect x="13.9" y="68.5" width="5.7" height="1.3" fill="#000"/><rect x="5.4" y="35.5" width="6.0" height="4.2" fill="#000"/><rect x="14.7" y="66.2" width="2.8" height="2.9" fill="#a0e0f0"/><rect x="52.3" y="18.3" width="3.4" height="3.0" fill="#103060"/><rect x="35.6" y="62.1" width="4.8" height="1.9" fill="#000"/><rect x="27.6" y="11.1" width="5.8" height="3.2" fill="#000"/><rect x="21.1" y="9.8" width="3.4" height="2.1" fill="#2050a0"/><rect x="0.1" y="52.6" width="5.4" height="1.6" fill="#a0e0f0"/><rect x="49.9" y="63.1" width="3.2" height="2.3" fill="#000"/><rect x="27.3" y="60.9" width="2.3" height="4.0" fill="#2050a0"/></pattern><linearGradient id="bgg" x1="0" y1="465" x2="0" y2="1440" gradientUnits="userSpaceOnUse">
<stop offset="0" stop-color="#f7a01e"/><stop offset="0.07" stop-color="#f9aa1a"/><stop offset="0.13" stop-color="#fcb614"/>
<stop offset="0.17" stop-color="#ffc000"/><stop offset="0.8" stop-color="#ffc000"/><stop offset="0.86" stop-color="#fcb614"/>
<stop offset="0.93" stop-color="#f9aa1a"/><stop offset="1" stop-color="#f7a01e"/></linearGradient><linearGradient id="topband" x1="0" y1="600" x2="0" y2="700" gradientUnits="userSpaceOnUse">
<stop offset="0" stop-color="#fdc80c"/><stop offset="0.14" stop-color="#f6ec00"/><stop offset="0.48" stop-color="#e4f400"/>
<stop offset="0.58" stop-color="#a8ec20"/><stop offset="0.7" stop-color="#80e840"/><stop offset="0.84" stop-color="#90e8a0"/><stop offset="1" stop-color="#a8e8d8"/></linearGradient><linearGradient id="botband" x1="0" y1="1218" x2="0" y2="1302" gradientUnits="userSpaceOnUse">
<stop offset="0" stop-color="#a0e0e0"/><stop offset="0.12" stop-color="#90e890"/><stop offset="0.3" stop-color="#84ee30"/>
<stop offset="0.52" stop-color="#c0f000"/><stop offset="0.65" stop-color="#eaf000"/><stop offset="0.88" stop-color="#f8e400"/><stop offset="1" stop-color="#fdc80c"/></linearGradient><linearGradient id="rwedge" x1="1567" y1="0" x2="1757" y2="0" gradientUnits="userSpaceOnUse">
<stop offset="0" stop-color="#98e0b0"/><stop offset="0.17" stop-color="#70e030"/><stop offset="0.33" stop-color="#c0ec00"/>
<stop offset="0.5" stop-color="#f8f000"/><stop offset="0.8" stop-color="#ffe400"/><stop offset="1" stop-color="#ffd400"/></linearGradient><linearGradient id="rlow" x1="1424" y1="0" x2="1757" y2="0" gradientUnits="userSpaceOnUse">
<stop offset="0" stop-color="#98d8e0"/><stop offset="0.33" stop-color="#a8e0d0"/><stop offset="0.42" stop-color="#78e050"/>
<stop offset="0.5" stop-color="#80e020"/><stop offset="0.6" stop-color="#e0f000"/><stop offset="0.77" stop-color="#fff000"/>
<stop offset="1" stop-color="#ffd400"/></linearGradient></defs>
<rect x="35" y="465" width="1722" height="975" fill="url(#bgg)"/>
<path d="M65,498 L91,496 L100,489 L300,487 L520,486 L700,489 L783,492 L790,505 L783,520 L600,522 L300,521 L100,520 L91,510 L65,503 Z" fill="#ff2200"/>
<path d="M92,492 L120,488 L400,486 L700,489 L783,493 L786,507 L780,519 L500,522 L200,521 L100,518 L90,506 Z" fill="url(#nz)"/>
<path d="M783,493 L838,493 L860,505 L874,524 L838,521 L783,519 Z" fill="#ff2200"/>
<path d="M461,490 L594,488 L594,494 L461,494 Z" fill="#ff2200"/>
<path d="M900,496 L930,490 L990,496 L1042,502 L1030,513 L960,514 L910,512 Z" fill="#ff2200"/>
<path d="M1084,506 L1150,498 L1200,494 L1265,503 L1250,513 L1120,514 Z" fill="#ff2200"/>
<path d="M1318,510 L1340,494 L1400,494 L1453,500 L1453,515 L1330,515 Z" fill="#ff2200"/>
<path d="M1457,494 L1513,492 L1513,516 L1457,516 Z" fill="url(#nz)"/>
<path d="M1513,488 L1600,485 L1680,487 L1733,490 L1730,506 L1700,513 L1640,520 L1560,518 L1513,516 Z" fill="#ff2200"/>
<ellipse cx="1581" cy="506" rx="30" ry="10" fill="#8ee070"/>
<path d="M196,560 L230,554 L300,553 L531,553 L541,556 L716,553 L740,562 L751,558 L797,558 L830,562 L797,572 L716,575 L541,573 L531,572 L262,574 L245,582 L230,574 Z" fill="#ff2200"/>
<path d="M245,556 L287,556 L287,566 L245,566 Z" fill="#1a3a30"/>
<path d="M1091,562 L1140,552 L1200,552 L1237,560 L1200,572 L1120,572 Z" fill="#ff2200"/>
<path d="M1361,562 L1400,553 L1500,552 L1600,553 L1616,558 L1590,572 L1560,580 L1556,595 L1530,575 L1420,572 Z" fill="#ff2200"/>
<path d="M830,562 Q1000,570 1091,562 M1237,560 Q1300,567 1361,562" stroke="#ff2200" stroke-width="3" fill="none"/>
<path d="M230,618 L400,612 L600,608 L900,606 L1100,608 L1282,612 L1300,640 L1282,664 L1082,671 L997,668 L884,677 L799,656 L736,658 L690,680 L262,702 L245,660 Z" fill="url(#topband)"/>
<path d="M548,616 Q700,614 835,606 Q1000,610 1282,612" stroke="#f08010" stroke-width="3" fill="none" opacity="0.7"/>
<path d="M548,606 L600,600 L760,599 L835,603 L800,616 L600,617 Z" fill="#ff2200"/>
<path d="M311,608 L325,604 L339,608 L325,613 Z" fill="#ff2200"/>
<path d="M35,532 L56,534 L72,562 L122,577 L185,598 L222,619 L262,633 L285,660 L270,668 L230,641 L210,629 L182,615 L122,594 L80,570 L35,563 Z" fill="#ff2200"/>
<path d="M1567,623 L1640,590 L1700,562 L1751,540 L1757,538 L1757,745 L1680,742 L1630,705 L1595,665 Z" fill="url(#rwedge)"/>
<path d="M1567,623 L1751,540 M1567,623 L1595,665 L1630,705 L1684,742" stroke="#e87010" stroke-width="3" fill="none" opacity="0.8"/>
<path d="M35,566 L83,580 L172,600 L229,620 L262,650 L275,684 L590,684 L640,676 L688,674 L682,680 L672,710 L619,731 L606,762 L614,797 L645,830 L651,889 L672,928 L696,956 L726,980 L773,995 L815,992 L880,966 L900,958 L1000,962 L1189,965 L1262,980 L1370,980 L1424,958 L1453,947 L1468,958 L1479,1001 L1440,1010 L1440,1135 L1490,1150 L1505,1193 L1500,1222 L900,1222 L392,1222 L320,1234 L260,1270 L157,1310 L35,1356 Z" fill="url(#nzb)"/>
<path d="M35,590 L83,609 L172,627 L229,644 L257,666 L270,695 L590,695 L604,715 L594,744 L597,797 L615,832 L640,886 L668,939 L700,962 L760,985 L800,992 L900,988 L1424,988 L1424,1135 L1479,1157 L1493,1193 L392,1193 L301,1226 L247,1251 L157,1287 L35,1331 Z" fill="#000"/>
<rect x="359" y="708" width="60" height="12" fill="#407880"/><rect x="410" y="704" width="12" height="24" fill="#a8e0f0"/><rect x="359" y="718" width="60" height="6" fill="#a8e0f0"/>
<rect x="1233" y="989" width="43" height="5" fill="#a8d0f0"/><rect x="1280" y="1002" width="90" height="5" fill="#c8e8f0"/><rect x="1233" y="1010" width="43" height="4" fill="#a0d0f0"/><rect x="1390" y="1000" width="12" height="12" fill="#c8e8f0"/>
<rect x="337" y="1198" width="70" height="5" fill="#a8d8f0"/>
<rect x="470" y="1197" width="120" height="8" fill="#90c8e0"/>
<rect x="601" y="1200" width="36" height="4" fill="#c0e0f0"/>
<rect x="640" y="1196" width="40" height="22" fill="#3a78c8"/>
<rect x="660" y="1200" width="15" height="14" fill="#80b8f0"/>
<rect x="700" y="1197" width="60" height="6" fill="#a0d0e8"/>
<rect x="911" y="1198" width="55" height="7" fill="#a8d8f0"/>
<rect x="980" y="1200" width="30" height="5" fill="#90c0e0"/>
<rect x="1030" y="1203" width="60" height="5" fill="#a0d0f0"/>
<rect x="1120" y="1198" width="40" height="6" fill="#80b0e0"/>
<rect x="1200" y="1201" width="70" height="5" fill="#a8d8f0"/>
<rect x="1300" y="1199" width="50" height="6" fill="#90c8e8"/>
<rect x="1380" y="1196" width="80" height="8" fill="#7ab0e0"/>
<rect x="420" y="1208" width="50" height="4" fill="#5080c0"/>
<rect x="820" y="1210" width="60" height="4" fill="#5080c0"/>
<rect x="1150" y="1212" width="60" height="4" fill="#6090c8"/>
<path d="M688,676 L738,655 L742,660 L716,684 L694,703 L684,732 L658,736 L637,756 L634,779 L644,800 L670,817 L673,868 L687,901 L707,935 L734,962 L775,979 L815,976 L872,957 L880,966 L815,992 L773,995 L726,980 L696,956 L672,928 L651,889 L645,830 L614,797 L606,762 L619,731 L672,710 L682,680 Z" fill="#ff2200"/>
<path d="M736,657 L787,651 L844,668 L900,677 L997,668 L1082,671 L1282,664 L1420,640 L1567,628 L1595,665 L1630,705 L1684,742 L1757,745 L1757,889 L1684,892 L1587,962 L1544,998 L1515,1009 L1479,1001 L1468,958 L1453,947 L1424,958 L1370,980 L1262,980 L1189,965 L1045,962 L960,949 L915,946 L872,960 L815,980 L773,983 L730,966 L702,938 L682,904 L668,870 L665,821 L639,804 L628,779 L631,753 L654,731 L679,728 L688,699 L713,680 Z" fill="#ffc200"/>
<path d="M736,657 L787,651 L844,668 L900,677 L997,668 L1082,671 L1282,664 L1370,652 L1420,668" stroke="#e88010" stroke-width="3" fill="none" opacity="0.8"/>
<path d="M1371,655 L1390,652 L1420,668 L1440,684 L1470,690 L1465,634 L1480,636 L1492,650 L1499,690 L1490,698 L1460,697 L1430,690 L1400,672 L1375,668 Z" fill="#ff2200"/>
<ellipse cx="1446" cy="661" rx="25" ry="27" fill="#8ee060"/>
<path d="M1280,663 L1340,650 L1371,655" stroke="#e88010" stroke-width="3" fill="none"/>
<path d="M1424,988 L1453,960 L1468,962 L1479,1001 L1515,1009 L1544,998 L1587,962 L1684,892 L1757,889 L1757,1338 L1680,1310 L1580,1268 L1479,1229 L1493,1203 L1493,1193 L1479,1157 L1424,1135 Z" fill="url(#rlow)"/>
<ellipse cx="1500" cy="1072" rx="26" ry="14" fill="#507860" opacity="0.85"/>
<path d="M1437,965 Q1440,938 1462,936 Q1482,940 1484,962 Q1470,985 1476,1000 Q1485,1010 1500,1008" stroke="#ff2200" stroke-width="9" fill="none"/>
<circle cx="1455" cy="954" r="12" fill="#0a2028" stroke="#50a0a0" stroke-width="2"/>
<path d="M1587,962 L1684,892 L1751,889" stroke="#ff2200" stroke-width="4" fill="none" opacity="0.7"/>
<path d="M1560,948 L1590,940 L1610,955 L1585,968 Z" fill="#ff2200"/>
<path d="M1453,947 L1468,940 L1480,950 L1478,1000 L1500,1008 L1475,1010 L1462,990 L1455,960 Z" fill="#ff2200"/>
<path d="M1479,1229 L1580,1268 L1680,1310 L1757,1338" stroke="#e87010" stroke-width="3" fill="none" opacity="0.8"/>
<ellipse cx="1492" cy="1197" rx="22" ry="17" fill="#2050a8"/><ellipse cx="1488" cy="1192" rx="9" ry="7" fill="#80b8f0"/>
<path d="M305,1232 L392,1221 L900,1221 L1493,1221 L1479,1229 L1580,1268 L1400,1290 L1000,1300 L600,1302 L300,1295 L262,1270 Z" fill="url(#botband)"/>
<path d="M35,1366 L157,1318 L247,1268 L298,1250 L310,1258 L260,1280 L160,1330 L35,1378 Z" fill="#ff2200"/>
<path d="M270,1305 Q400,1296 520,1306 T760,1304 T1000,1300 T1240,1302 T1460,1298 L1620,1300" stroke="#ff2200" stroke-width="5" fill="none" opacity="0.85"/>
<path d="M1440,1310 L1480,1298 L1510,1285 L1530,1300 L1560,1315 L1500,1320 Z" fill="#ff2200"/>
<path d="M200,1370 Q500,1350 900,1352 T1757,1345" stroke="#f07010" stroke-width="3" fill="none" opacity="0.8"/>
<path d="M175,1358 L250,1345 L400,1342 L700,1342 L900,1338 L961,1336 L975,1350 L961,1364 L900,1367 L600,1368 L300,1366 L220,1370 Z" fill="#ff2200"/>
<path d="M961,1350 Q1050,1344 1150,1352 T1350,1348 T1550,1350 T1757,1346" stroke="#ff2200" stroke-width="5" fill="none" opacity="0.9"/>
<path d="M1464,1346 L1520,1338 L1590,1340 L1601,1350 L1560,1357 L1480,1356 Z" fill="#ff2200"/>
<path d="M413,1344 L634,1342 L634,1364 L413,1366 Z" fill="url(#nz)"/>
<path d="M262,1347 L282,1347 L282,1362 L262,1362 Z" fill="#6aa070"/>
<path d="M348,1347 L372,1347 L372,1362 L348,1362 Z" fill="#3a6a50"/>
<path d="M102,1420 L157,1400 L300,1398 L699,1399 L880,1398 L900,1420 L880,1426 L699,1426 L300,1428 L157,1426 Z" fill="#ff2200"/>
<path d="M157,1402 L400,1398 L699,1400 L699,1425 L400,1427 L157,1425 Z" fill="url(#nz)"/>
<path d="M739,1401 L833,1400 L833,1424 L739,1424 Z" fill="url(#nz)"/>
<path d="M987,1400 L1100,1390 L1300,1392 L1406,1405 L1300,1417 L1100,1418 L987,1412 Z" fill="#ff2200"/>
<path d="M1010,1397 L1080,1396 L1080,1410 L1010,1410 Z" fill="url(#nz)"/>
<path d="M1508,1405 L1600,1390 L1700,1392 L1732,1400 L1700,1412 L1560,1417 Z" fill="#ff2200"/>
<ellipse cx="1570" cy="1400" rx="28" ry="9" fill="#8ee070"/>
<rect x="36.5" y="466.5" width="1719" height="972" fill="none" stroke="#7a5a28" stroke-width="3"/>
</svg>
<svg style="left:1758px;top:454px" width="70" height="1006" viewBox="1758 454 70 1006">
<defs><linearGradient id="cb" x1="0" y1="473" x2="0" y2="1441" gradientUnits="userSpaceOnUse">
<stop offset="0" stop-color="#ff1000"/>
<stop offset="0.12" stop-color="#ff6a10"/>
<stop offset="0.22" stop-color="#ffb000"/>
<stop offset="0.32" stop-color="#ffff00"/>
<stop offset="0.40" stop-color="#50f010"/>
<stop offset="0.46" stop-color="#90f090"/>
<stop offset="0.52" stop-color="#90e8f0"/>
<stop offset="0.57" stop-color="#5a9080"/>
<stop offset="0.68" stop-color="#1a5010"/>
<stop offset="0.73" stop-color="#102040"/>
<stop offset="0.79" stop-color="#0000a0"/>
<stop offset="0.84" stop-color="#2070e0"/>
<stop offset="0.89" stop-color="#30c0ff"/>
<stop offset="1" stop-color="#90e8ff"/>
</linearGradient></defs>
<rect x="1761.5" y="457.5" width="60" height="999" fill="url(#cb)" stroke="#404040" stroke-width="3"/>
<rect x="1763" y="459" width="57" height="14" fill="#c01010"/>
<rect x="1763" y="469" width="57" height="4" fill="#400000"/>
<rect x="1763" y="1441" width="57" height="14" fill="#000"/>
</svg>
<div class="b" style="left:1829px;top:474px;width:14px;height:4px;background:#3a3a3a"></div>
<div class="t" style="left:1848.0px;top:460.3px;font-size:47.83px;line-height:47.83px;font-family:'Liberation Mono', monospace;color:#e0607a;transform:scaleX(0.7840);">255</div>
<div class="b" style="left:1829px;top:556px;width:14px;height:4px;background:#3a3a3a"></div>
<div class="t" style="left:1848.0px;top:542.3px;font-size:47.83px;line-height:47.83px;font-family:'Liberation Mono', monospace;color:#e0607a;transform:scaleX(0.7840);">158</div>
<div class="b" style="left:1829px;top:681.4px;width:14px;height:4.0px;background:#3a3a3a"></div>
<div class="t" style="left:1848.0px;top:667.7px;font-size:47.83px;line-height:47.83px;font-family:'Liberation Mono', monospace;color:#e0607a;transform:scaleX(0.7666);">78</div>
<div class="b" style="left:1829px;top:782.3px;width:14px;height:4.0px;background:#3a3a3a"></div>
<div class="t" style="left:1848.0px;top:768.6px;font-size:47.83px;line-height:47.83px;font-family:'Liberation Mono', monospace;color:#e0607a;transform:scaleX(0.7666);">43</div>
<div class="b" style="left:1829px;top:861.5px;width:14px;height:4.0px;background:#3a3a3a"></div>
<div class="t" style="left:1848.0px;top:847.8px;font-size:47.83px;line-height:47.83px;font-family:'Liberation Mono', monospace;color:#e0607a;transform:scaleX(0.7666);">28</div>
<div class="b" style="left:1829px;top:967.3px;width:14px;height:4.0px;background:#3a3a3a"></div>
<div class="t" style="left:1848.0px;top:953.6px;font-size:47.83px;line-height:47.83px;font-family:'Liberation Mono', monospace;color:#e0607a;transform:scaleX(0.7666);">15</div>
<div class="b" style="left:1829px;top:1140.6px;width:14px;height:4.0px;background:#3a3a3a"></div>
<div class="t" style="left:1848.0px;top:1126.9px;font-size:47.83px;line-height:47.83px;font-family:'Liberation Mono', monospace;color:#e0607a;transform:scaleX(0.7143);">6</div>
<div class="b" style="left:1829px;top:1243.7px;width:14px;height:4.0px;background:#3a3a3a"></div>
<div class="t" style="left:1848.0px;top:1230.0px;font-size:47.83px;line-height:47.83px;font-family:'Liberation Mono', monospace;color:#e0607a;transform:scaleX(0.7143);">3</div>
<div class="b" style="left:1829px;top:1341.4px;width:14px;height:4.0px;background:#3a3a3a"></div>
<div class="t" style="left:1848.0px;top:1327.7px;font-size:47.83px;line-height:47.83px;font-family:'Liberation Mono', monospace;color:#e0607a;transform:scaleX(0.7143);">2</div>
<div class="b" style="left:1829px;top:1439px;width:14px;height:4px;background:#3a3a3a"></div>
<div class="t" style="left:1848.0px;top:1425.3px;font-size:47.83px;line-height:47.83px;font-family:'Liberation Mono', monospace;color:#e0607a;transform:scaleX(0.7143);">1</div>
<div class="t" style="left:711.4px;top:339.6px;font-size:89.68px;line-height:89.68px;font-family:'Liberation Sans', sans-serif;color:#111;transform:scaleX(1.0423);">Depth image</div>
<div class="b" style="left:37px;top:1486px;width:1901px;height:182px;background:linear-gradient(#d4d4d4 0,#cdcdcd 8%,#c6c6c6 20%,#bdbdbd 50%,#b4b4b4 80%,#b8b8b8 85%,#8c8c8c 94%,#555 100%);border-top:5px solid #888;border-left:4px solid #777;border-right:4px solid #666"></div>
<div class="b" style="left:41px;top:1491px;width:15px;height:149px;background:linear-gradient(90deg,#d6d6d6,rgba(214,214,214,0))"></div>
<div class="b" style="left:41px;top:1491px;width:1893px;height:29px;background:linear-gradient(#d4d4d4,rgba(212,212,212,0))"></div>
<div class="b" style="left:1914px;top:1491px;width:20px;height:173px;background:linear-gradient(90deg,rgba(100,100,100,0),#7a7a7a 70%,#5a5a5a)"></div>
<div class="t" style="left:895.0px;top:1529.8px;font-size:95.93px;line-height:95.93px;font-family:'Liberation Sans', sans-serif;color:#e8141e;transform:scaleX(0.9426);">Stop</div>
<div class="b" style="left:1986px;top:352px;width:1171px;height:366px;background:#c0c0c0"></div>
<div class="b" style="left:1986px;top:352px;width:16px;height:326px;background:linear-gradient(90deg,#d0d0d0,#d0d0d0 45%,#c0c0c0)"></div>
<div class="b" style="left:1986px;top:352px;width:1171px;height:2px;background:#c6c6c6"></div>
<div class="b" style="left:1992px;top:354px;width:1155px;height:42px;background:linear-gradient(#d3d3d3 0,#d3d3d3 75%,#c0c0c0 100%)"></div>
<div class="b" style="left:1986px;top:354px;width:8px;height:42px;background:#d0d0d0"></div>
<div class="b" style="left:3141px;top:362px;width:16px;height:356px;background:linear-gradient(90deg,#c0c0c0,#c6c6c6 40%,#a8a8a8 75%,#939393)"></div>
<div class="b" style="left:1986px;top:674px;width:1171px;height:44px;background:linear-gradient(#c0c0c0 0,#a8a8a8 50%,#8a8a8a 78%,#666 88%,#616161 100%)"></div>
<div class="t" style="left:2287.5px;top:350.5px;font-size:94.33px;line-height:94.33px;font-family:'Liberation Sans', sans-serif;color:#111;transform:scaleX(0.9495);">System status</div>
<div class="b" style="left:2148px;top:465px;width:823px;height:177px;background:#d3d3d3;border-left:9px solid #8e8e8e;border-top:10px solid #8e8e8e;border-right:8px solid #c8c8c8;border-bottom:10px solid #c8c8c8;box-shadow:inset 3px 3px 4px rgba(0,0,0,0.12)"></div>
<div class="t" style="left:2165.0px;top:481.7px;font-size:42.30px;line-height:42.30px;font-family:'Liberation Sans', sans-serif;color:#3a3a3a;transform:scaleX(0.9262);">Weight Estimation</div>
<div class="b" style="left:1986px;top:754px;width:1171px;height:694px;background:#c0c0c0"></div>
<div class="b" style="left:1986px;top:754px;width:16px;height:654px;background:linear-gradient(90deg,#d0d0d0,#d0d0d0 45%,#c0c0c0)"></div>
<div class="b" style="left:1986px;top:754px;width:1171px;height:2px;background:#c6c6c6"></div>
<div class="b" style="left:1992px;top:756px;width:1155px;height:42px;background:linear-gradient(#d3d3d3 0,#d3d3d3 75%,#c0c0c0 100%)"></div>
<div class="b" style="left:1986px;top:756px;width:8px;height:42px;background:#d0d0d0"></div>
<div class="b" style="left:3141px;top:764px;width:16px;height:684px;background:linear-gradient(90deg,#c0c0c0,#c6c6c6 40%,#a8a8a8 75%,#939393)"></div>
<div class="b" style="left:1986px;top:1404px;width:1171px;height:44px;background:linear-gradient(#c0c0c0 0,#a8a8a8 50%,#8a8a8a 78%,#666 88%,#616161 100%)"></div>
<div class="t" style="left:2199.4px;top:802.2px;font-size:93.31px;line-height:93.31px;font-family:'Liberation Sans', sans-serif;color:#111;transform:scaleX(0.9906);">Estimation results</div>
<div class="t" style="left:2062.0px;top:941.8px;font-size:64.53px;line-height:64.53px;font-family:'Liberation Sans', sans-serif;color:#151515;transform:scaleX(0.9787);">BL/cm</div>
<div class="t" style="left:2423.5px;top:941.8px;font-size:64.53px;line-height:64.53px;font-family:'Liberation Sans', sans-serif;color:#151515;transform:scaleX(1.0109);">SW/cm</div>
<div class="t" style="left:2772.0px;top:941.8px;font-size:64.53px;line-height:64.53px;font-family:'Liberation Sans', sans-serif;color:#151515;transform:scaleX(1.0098);">SH/cm</div>
<div class="t" style="left:2056.6px;top:1193.4px;font-size:72.24px;line-height:72.24px;font-family:'Liberation Sans', sans-serif;color:#151515;transform:scaleX(0.9353);">HH/cm</div>
<div class="t" style="left:2423.5px;top:1194.6px;font-size:72.09px;line-height:72.09px;font-family:'Liberation Sans', sans-serif;color:#151515;transform:scaleX(0.9367);">HW/cm</div>
<div class="t" style="left:2774.0px;top:1194.8px;font-size:70.49px;line-height:70.49px;font-family:'Liberation Sans', sans-serif;color:#151515;transform:scaleX(0.9321);">BW/kg</div>
<div class="b" style="left:2050px;top:1019px;width:300px;height:99px;background:#d4d4d4;border-left:9px solid #8e8e8e;border-top:10px solid #8e8e8e;border-right:8px solid #c8c8c8;border-bottom:10px solid #c8c8c8;box-shadow:inset 3px 3px 4px rgba(0,0,0,0.12)"></div>
<div class="b" style="left:2418px;top:1021px;width:299px;height:98px;background:#d4d4d4;border-left:9px solid #8e8e8e;border-top:10px solid #8e8e8e;border-right:8px solid #c8c8c8;border-bottom:10px solid #c8c8c8;box-shadow:inset 3px 3px 4px rgba(0,0,0,0.12)"></div>
<div class="b" style="left:2758px;top:1021px;width:301px;height:100px;background:#d4d4d4;border-left:9px solid #8e8e8e;border-top:10px solid #8e8e8e;border-right:8px solid #c8c8c8;border-bottom:10px solid #c8c8c8;box-shadow:inset 3px 3px 4px rgba(0,0,0,0.12)"></div>
<div class="b" style="left:2052px;top:1283px;width:297px;height:95px;background:#d4d4d4;border-left:9px solid #8e8e8e;border-top:10px solid #8e8e8e;border-right:8px solid #c8c8c8;border-bottom:10px solid #c8c8c8;box-shadow:inset 3px 3px 4px rgba(0,0,0,0.12)"></div>
<div class="b" style="left:2418px;top:1283px;width:299px;height:97px;background:#d4d4d4;border-left:9px solid #8e8e8e;border-top:10px solid #8e8e8e;border-right:8px solid #c8c8c8;border-bottom:10px solid #c8c8c8;box-shadow:inset 3px 3px 4px rgba(0,0,0,0.12)"></div>
<div class="b" style="left:2758px;top:1290px;width:301px;height:98px;background:#d4d4d4;border-left:9px solid #8e8e8e;border-top:10px solid #8e8e8e;border-right:8px solid #c8c8c8;border-bottom:10px solid #c8c8c8;box-shadow:inset 3px 3px 4px rgba(0,0,0,0.12)"></div>
<div class="t" style="left:2071.4px;top:1039.8px;font-size:58.17px;line-height:58.17px;font-family:'Liberation Sans', sans-serif;color:#2a2a2a;transform:scaleX(0.8828);">91</div>
<div class="t" style="left:2438.3px;top:1038.9px;font-size:59.17px;line-height:59.17px;font-family:'Liberation Sans', sans-serif;color:#2a2a2a;transform:scaleX(0.9225);">24</div>
<div class="t" style="left:2779.4px;top:1038.9px;font-size:59.17px;line-height:59.17px;font-family:'Liberation Sans', sans-serif;color:#2a2a2a;transform:scaleX(0.9256);">52</div>
<div class="t" style="left:2073.0px;top:1301.7px;font-size:58.02px;line-height:58.02px;font-family:'Liberation Sans', sans-serif;color:#2a2a2a;transform:scaleX(0.9175);">57</div>
<div class="t" style="left:2438.3px;top:1301.7px;font-size:58.02px;line-height:58.02px;font-family:'Liberation Sans', sans-serif;color:#2a2a2a;transform:scaleX(0.9408);">23</div>
<div class="t" style="left:2779.4px;top:1309.1px;font-size:58.02px;line-height:58.02px;font-family:'Liberation Sans', sans-serif;color:#2a2a2a;transform:scaleX(0.9308);">56.2</div>
<div class="t" style="left:2068.0px;top:1461.2px;font-size:57.70px;line-height:57.70px;font-family:'Liberation Sans', sans-serif;color:#222;transform:scaleX(1.0561);">Stardand weight/kg</div>
<div class="t" style="left:2644.8px;top:1459.6px;font-size:59.59px;line-height:59.59px;font-family:'Liberation Sans', sans-serif;color:#222;transform:scaleX(0.9727);">Growth status</div>
<div class="b" style="left:2069px;top:1538px;width:343px;height:120px;background:#e6e6e6;border:3px solid #9a9a9a;border-radius:8px;box-shadow:inset 0 0 0 5px #f4f4f4,0 5px 8px rgba(0,0,0,0.18)"></div>
<div class="b" style="left:2089px;top:1553px;width:38px;height:30px;background:#f0f0f0;border:2px solid #bdbdbd;border-radius:3px"></div>
<div class="b" style="left:2089px;top:1611px;width:38px;height:29px;background:#f0f0f0;border:2px solid #bdbdbd;border-radius:3px"></div>
<svg style="left:2096px;top:1560px" width="24" height="16" viewBox="0 0 24 16"><path d="M5 12 L12 4 L19 12 Z" fill="#666"/></svg>
<svg style="left:2096px;top:1618px" width="24" height="16" viewBox="0 0 24 16"><path d="M5 4 L12 12 L19 4 Z" fill="#666"/></svg>
<div class="b" style="left:2140px;top:1554px;width:256px;height:87px;background:#fafafa;border-left:5px solid #8a8a8a;border-top:5px solid #8a8a8a;border-right:5px solid #9a9a9a;border-bottom:3px solid #d8d8d8"></div>
<div class="t" style="left:2160.0px;top:1568.5px;font-size:60.17px;line-height:60.17px;font-family:'Liberation Sans', sans-serif;color:#2a2a2a;transform:scaleX(0.9042);">50</div>
<div class="b" style="left:2550px;top:1538px;width:495px;height:120px;background:#e6e6e6;border:3px solid #9a9a9a;border-radius:8px;box-shadow:inset 0 0 0 5px #f4f4f4,0 5px 8px rgba(0,0,0,0.18)"></div>
<div class="b" style="left:2569px;top:1554px;width:458px;height:87px;background:#d6d6d6;border-left:5px solid #8a8a8a;border-top:5px solid #8a8a8a;border-right:5px solid #9a9a9a;border-bottom:3px solid #d8d8d8"></div>
<div class="t" style="left:2587.8px;top:1569.2px;font-size:59.30px;line-height:59.30px;font-family:'Liberation Sans', sans-serif;color:#222;transform:scaleX(1.0021);">Fast-growing</div>
</body></html>
